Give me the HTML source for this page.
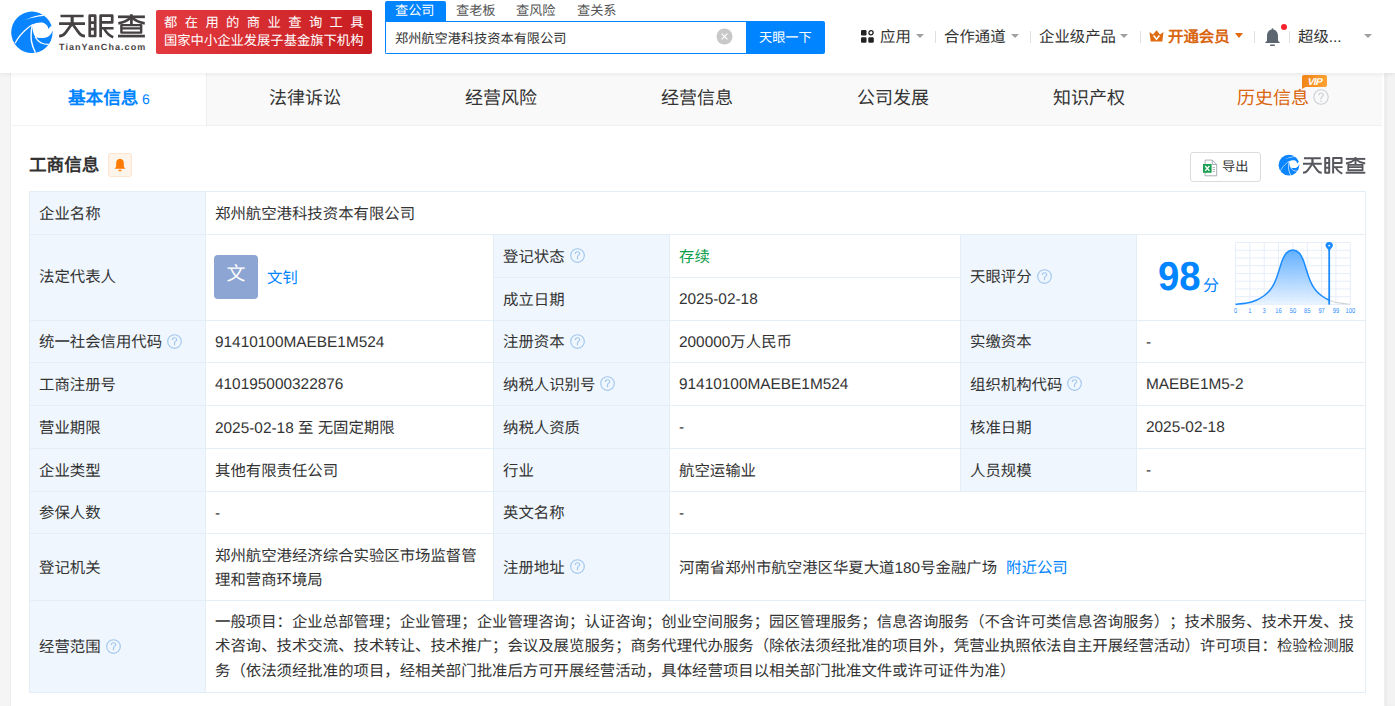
<!DOCTYPE html>
<html lang="zh-CN"><head><meta charset="utf-8">
<style>
*{box-sizing:border-box;margin:0;padding:0}
html,body{width:1395px;height:706px;overflow:hidden}
body{position:relative;background:#f5f5f5;font-family:"Liberation Sans",sans-serif;color:#333;text-spacing-trim:space-all;text-rendering:geometricPrecision;font-size:15.4px}
.a{position:absolute}
.nw{white-space:nowrap}
#hdr{left:0;top:0;width:1395px;height:73px;background:#fff;z-index:2;box-shadow:0 1px 5px rgba(0,0,0,.075)}
#card{left:11px;top:73px;width:1373px;height:633px;background:#fff;box-shadow:0 0 2px rgba(0,0,0,.09)}
#rstrip{left:1385px;top:73px;width:10px;height:633px;background:#f3f3f3;box-shadow:inset 2px 0 2px rgba(0,0,0,.03)}
.tabbar{left:11px;top:73px;width:1371px;height:53px;background:#f9f9f9;border-bottom:1px solid #f0f0f0}
.tab{top:72px;height:52px;line-height:52px;font-size:18px;color:#333;text-align:center;width:196px}
.cell{position:absolute;border:1px solid #e4eef6;display:flex;align-items:center;padding-left:9px;padding-top:3px;font-size:15.4px;line-height:20px;color:#333;white-space:nowrap}
.lb{background:#eff6fd}
.q{display:inline-block;width:15px;height:15px;margin-left:5px;vertical-align:middle;position:relative;top:-2px}
.caret{position:absolute;width:0;height:0;border-left:4px solid transparent;border-right:4px solid transparent;border-top:4px solid #a0a0a0}
.sep{position:absolute;width:1px;height:12px;background:#e0e0e0;top:31px}
.nav{position:absolute;top:28px;line-height:20px;font-size:15.4px;color:#333;white-space:nowrap}
</style></head><body>
<div id="hdr" class="a">
  <!-- logo -->
  <svg width="0" height="0" style="position:absolute"><symbol id="logo" viewBox="0 0 50 50">
    <circle cx="23.9" cy="24.3" r="20.7" fill="#0a84ff"/>
    <path d="M24.3,16.8 C27,14.9 31,14.2 34,14.5 C37.5,15 39.9,17.6 40.4,21 L42.6,18.3 L48,18 L48,22.7 L44.6,22.7 C43.2,26.5 40.3,29.3 36.8,29.8 C33,30.3 29.5,30 27.3,29 C25.2,26 24.4,21.5 24.3,16.8 Z" fill="#fff"/>
    <path d="M7.1,35.2 C10,29.5 14,25 18,21.5 C20,19.6 22.6,17.6 25,16.5" stroke="#fff" stroke-width="1.2" fill="none"/>
    <path d="M24.3,17 C23.3,22 22.5,28 23.5,33.5 C24.3,38 25.8,41.5 27.5,44.8" stroke="#fff" stroke-width="1.4" fill="none"/>
    <path d="M27.1,28.8 C28.5,31.5 30.5,33.5 33,34.8 C35,35.9 37.5,36.5 40.8,36.4" stroke="#fff" stroke-width="1.3" fill="none"/>
    <path d="M16.5,12.2 C22,9.2 29,7.1 36,6.4 L35.6,8.1 C29,8.5 23,10 16.5,12.2 Z" fill="#fff"/>
  </symbol></svg>
  <svg class="a" style="left:8px;top:8px" width="50" height="50" viewBox="0 0 50 50"><use href="#logo"/></svg>
  <svg width="0" height="0" style="position:absolute"><symbol id="lt" viewBox="0 0 1395 470"><g fill="none" stroke="currentColor" stroke-width="40" stroke-linejoin="round">
<path d="M80,88 L420,88 M60,200 L440,200"/>
<path d="M252,100 L252,205" stroke-width="46"/>
<path d="M245,210 L150,340 Q120,383 60,383"/>
<path d="M259,210 L354,340 Q384,383 440,383"/>
<path d="M510,83 L510,382 L590,382 L590,83 Z M510,185 L590,185 M510,280 L590,280"/>
<path d="M670,400 L670,83 L840,83 L840,182 L670,182 M690,268 L860,268"/>
<path d="M720,268 C750,330 790,375 855,400"/>
<path d="M925,100 L1320,100"/>
<path d="M1122,62 L1122,225"/>
<path d="M1108,115 C1060,160 1010,185 930,195"/>
<path d="M1136,115 C1185,160 1235,185 1318,195"/>
<path d="M975,222 L1265,222 L1265,332 L975,332 Z M975,270 L1265,270" stroke-width="36"/>
<path d="M925,383 L1320,383"/>
</g></symbol></svg><svg class="a" style="left:55px;top:10px;color:#454041" width="95" height="32" viewBox="0 0 1395 470"><use href="#lt"/></svg>
  <div class="a nw" style="left:59px;top:40.7px;font-size:9px;line-height:12px;font-weight:bold;color:#4a4546;letter-spacing:1.07px">TianYanCha.com</div>
  <!-- red badge -->
  <div class="a" style="left:156px;top:10px;width:216px;height:44px;border-radius:2px;background:linear-gradient(100deg,#e33b40,#c71d21)"></div>
  <div class="a nw" style="left:164px;top:14px;font-size:13.3px;line-height:17px;color:#fff;letter-spacing:7.4px">都在用的商业查询工具</div>
  <div class="a nw" style="left:164px;top:32px;font-size:13.3px;line-height:17px;color:#fff">国家中小企业发展子基金旗下机构</div>
  <!-- search -->
  <div class="a" style="left:385px;top:1px;width:61px;height:20px;background:#0084ff;border-radius:2px 2px 0 0"></div>
  <div class="a nw" style="left:395px;top:1.5px;font-size:13.2px;line-height:18px;color:#fff">查公司</div>
  <div class="a nw" style="left:456px;top:1.5px;font-size:13.2px;line-height:18px;color:#555">查老板</div>
  <div class="a nw" style="left:516px;top:1.5px;font-size:13.2px;line-height:18px;color:#555">查风险</div>
  <div class="a nw" style="left:577px;top:1.5px;font-size:13.2px;line-height:18px;color:#555">查关系</div>
  <div class="a" style="left:385px;top:21px;width:362px;height:33px;border:1px solid #0084ff;border-right:0;border-radius:0 0 0 2px;background:#fff"></div>
  <div class="a nw" style="left:395px;top:29.5px;font-size:13.2px;line-height:18px;color:#333">郑州航空港科技资本有限公司</div>
  <svg class="a" style="left:716px;top:28px" width="17" height="17" viewBox="0 0 17 17"><circle cx="8.5" cy="8.5" r="8" fill="#c8c8c8"/><path d="M5.6,5.6 L11.4,11.4 M11.4,5.6 L5.6,11.4" stroke="#fff" stroke-width="1.2"/></svg>
  <div class="a" style="left:746px;top:21px;width:79px;height:33px;background:#0084ff;border-radius:0 2px 2px 0"></div>
  <div class="a nw" style="left:759px;top:29px;font-size:13.2px;line-height:18px;color:#fff">天眼一下</div>
  <!-- right nav -->
  <svg class="a" style="left:861px;top:30px" width="13" height="13" viewBox="0 0 13 13">
    <rect x="0" y="0" width="5.5" height="5.5" rx="1.2" fill="#222"/>
    <circle cx="10" cy="2.8" r="2.1" fill="none" stroke="#222" stroke-width="1.3"/>
    <rect x="0" y="7.3" width="5.5" height="5.5" rx="1.2" fill="#222"/>
    <rect x="7.3" y="7.3" width="5.5" height="5.5" rx="1.2" fill="#222"/>
  </svg>
  <div class="nav" style="left:880px">应用</div>
  <div class="caret" style="left:916px;top:34px"></div>
  <div class="sep" style="left:935px"></div>
  <div class="nav" style="left:944px">合作通道</div>
  <div class="caret" style="left:1011px;top:34px"></div>
  <div class="sep" style="left:1030px"></div>
  <div class="nav" style="left:1039px">企业级产品</div>
  <div class="caret" style="left:1120px;top:34px"></div>
  <div class="sep" style="left:1140px"></div>
  <svg class="a" style="left:1149px;top:30px" width="15" height="12" viewBox="0 0 15 12">
    <path d="M0.5,2 L4,4.5 L7.5,0.3 L11,4.5 L14.5,2 L13.3,11.5 L1.7,11.5 Z" fill="#e06a10"/>
    <path d="M4.6,5.6 L7.5,9.3 L10.4,5.6" stroke="#fff" stroke-width="1.6" fill="none"/>
  </svg>
  <div class="nav" style="left:1168px;color:#d9650f;font-weight:bold">开通会员</div>
  <div class="caret" style="left:1235px;top:33px;border-top-color:#e06a10;border-left-width:4px;border-right-width:4px;border-top-width:5px"></div>
  <div class="sep" style="left:1254px"></div>
  <svg class="a" style="left:1264px;top:28px" width="17" height="19" viewBox="0 0 17 19">
    <path d="M8.5,1.5 C4.5,1.5 3,5 3,8 L3,12.5 L1,15 L16,15 L14,12.5 L14,8 C14,5 12.5,1.5 8.5,1.5 Z" fill="#5c6570"/>
    <rect x="6" y="16.5" width="5" height="1.5" rx="0.7" fill="#5c6570"/><rect x="7.6" y="0.3" width="1.8" height="2.2" rx="0.8" fill="#5c6570"/>
  </svg>
  <div class="a" style="left:1281px;top:24px;width:6px;height:6px;border-radius:50%;background:#f5222d"></div>
  <div class="sep" style="left:1289px"></div>
  <div class="nav" style="left:1298px">超级...</div>
  <div class="caret" style="left:1364px;top:34px"></div>
</div>

<div id="card" class="a"></div>
<div id="rstrip" class="a"></div>
<div class="a tabbar"></div>
<div class="a" style="left:11px;top:73px;width:196px;height:53px;background:#fff;border-right:1px solid #efefef;border-bottom:1px solid #f4f4f4"></div>
<div class="a nw" style="left:68px;top:80px;line-height:36px;font-size:17.6px;font-weight:bold;color:#0084ff">基本信息<span style="font-size:14px;font-weight:normal;margin-left:3.7px">6</span></div>
<div class="a tab" style="left:207px">法律诉讼</div>
<div class="a tab" style="left:403px">经营风险</div>
<div class="a tab" style="left:599px">经营信息</div>
<div class="a tab" style="left:795px">公司发展</div>
<div class="a tab" style="left:991px">知识产权</div>
<div class="a nw" style="left:1237px;top:72px;line-height:52px;font-size:18px;color:#d9650f">历史信息</div>
<svg class="a" style="left:1313px;top:89px" width="16" height="16" viewBox="0 0 16 16"><circle cx="8" cy="8" r="7.2" fill="none" stroke="#c9cfd6" stroke-width="1.1"/><path d="M5.8,6.3 C5.8,4.8 6.8,4 8,4 C9.3,4 10.3,4.8 10.3,6 C10.3,7.5 8,7.7 8,9.5 L8,10.5" fill="none" stroke="#c9cfd6" stroke-width="1.2"/><circle cx="8" cy="12.2" r="0.8" fill="#c9cfd6"/></svg>
<svg class="a" style="left:1302px;top:75px" width="25" height="14" viewBox="0 0 25 14"><defs><linearGradient id="vg" x1="0" y1="0" x2="1" y2="0"><stop offset="0" stop-color="#f0861a"/><stop offset="1" stop-color="#ffa233"/></linearGradient></defs><path d="M0,2 Q0,0 2,0 L23,0 Q25,0 25,2 L25,10 Q25,12 23,12 L3.5,12 L0,14 Z" fill="url(#vg)"/><text x="14.5" y="9.6" text-anchor="middle" font-family="Liberation Sans" font-weight="bold" font-size="10" fill="#fff" letter-spacing="-0.7" transform="skewX(-14)">VIP</text></svg>

<svg width="0" height="0" style="position:absolute"><symbol id="qi" viewBox="0 0 15 15"><circle cx="7.5" cy="7.5" r="6.8" fill="none" stroke="#a3c8ee" stroke-width="1.15"/><path d="M5.3,5.9 C5.3,4.4 6.3,3.7 7.5,3.7 C8.8,3.7 9.7,4.5 9.7,5.7 C9.7,7.1 7.5,7.3 7.5,9 L7.5,11.2" fill="none" stroke="#a3c8ee" stroke-width="1.15"/></symbol></svg>
<div class="a nw" style="left:29px;top:150px;font-size:17.6px;line-height:30px;font-weight:bold;color:#333">工商信息</div>
<div class="a" style="left:108px;top:153px;width:24px;height:24px;border:1px solid #ffe4cf;background:#fff4ea;border-radius:3px"></div>
<svg class="a" style="left:114px;top:158px" width="12" height="14" viewBox="0 0 12 14"><path d="M6,0.8 C3.3,0.8 2.2,3 2.2,5.3 L2.2,8.8 L0.6,10.8 L11.4,10.8 L9.8,8.8 L9.8,5.3 C9.8,3 8.7,0.8 6,0.8 Z" fill="#ff7a00"/><path d="M4.3,11.8 C4.5,13 5.2,13.5 6,13.5 C6.8,13.5 7.5,13 7.7,11.8 Z" fill="#ff7a00"/></svg>
<div class="a" style="left:1190px;top:152px;width:71px;height:30px;border:1px solid #dcdcdc;border-radius:3px;background:#fff"></div>
<svg class="a" style="left:1202px;top:158.5px" width="16" height="18" viewBox="0 0 16 18"><path d="M3.1,1.1 L10.3,1.1 L14.7,5.5 L14.7,16.8 L3.1,16.8 Z" fill="#fff" stroke="#a0a5aa" stroke-width="0.9"/><path d="M10.3,1.1 L10.3,5.5 L14.7,5.5" fill="none" stroke="#a0a5aa" stroke-width="0.9"/><path d="M10.6,8.5 L13,8.5 M10.6,10.5 L13,10.5 M10.6,12.5 L13,12.5" stroke="#a0a5aa" stroke-width="0.8"/><rect x="1" y="5" width="8.6" height="8.8" fill="#1ba053"/><path d="M3.2,7 L7.4,11.9 M7.4,7 L3.2,11.9" stroke="#fff" stroke-width="1.3"/></svg>
<div class="a nw" style="left:1222px;top:157.5px;font-size:13.2px;line-height:18px;color:#333">导出</div>
<svg class="a" style="left:1277px;top:153px" width="25" height="25" viewBox="0 0 50 50"><use href="#logo"/></svg>
<svg class="a" style="left:1300px;top:154px;color:#56575c" width="69" height="23" viewBox="0 0 1395 470" preserveAspectRatio="none"><use href="#lt"/></svg>
<div class="cell lb" style="left:29px;top:191px;width:177px;height:44px;">企业名称</div>
<div class="cell" style="left:205px;top:191px;width:1161px;height:44px;">郑州航空港科技资本有限公司</div>
<div class="cell lb" style="left:29px;top:234px;width:177px;height:87px;;padding-top:1px">法定代表人</div>
<div class="cell" style="left:205px;top:234px;width:289px;height:87px;"><div style="width:44px;height:44px;border-radius:4px;background:#8ca5d3;color:#fff;font-size:19px;text-align:center;line-height:40px;margin:-4px 9px 0 -1px">文</div><span style="color:#0084ff">文钊</span></div>
<div class="cell lb" style="left:493px;top:234px;width:177px;height:44px;">登记状态<svg class="q" viewBox="0 0 15 15"><use href="#qi"/></svg></div>
<div class="cell" style="left:669px;top:234px;width:292px;height:44px;"><span style="color:#0a9d4a">存续</span></div>
<div class="cell lb" style="left:493px;top:277px;width:177px;height:44px;">成立日期</div>
<div class="cell" style="left:669px;top:277px;width:292px;height:44px;padding-top:2px;">2025-02-18</div>
<div class="cell lb" style="left:960px;top:234px;width:177px;height:87px;;padding-top:1px">天眼评分<svg class="q" viewBox="0 0 15 15"><use href="#qi"/></svg></div>
<div class="cell" style="left:1136px;top:234px;width:230px;height:87px;"></div>
<div class="cell lb" style="left:29px;top:320px;width:177px;height:43px;">统一社会信用代码<svg class="q" viewBox="0 0 15 15"><use href="#qi"/></svg></div>
<div class="cell" style="left:205px;top:320px;width:289px;height:43px;padding-top:2px;">91410100MAEBE1M524</div>
<div class="cell lb" style="left:493px;top:320px;width:177px;height:43px;">注册资本<svg class="q" viewBox="0 0 15 15"><use href="#qi"/></svg></div>
<div class="cell" style="left:669px;top:320px;width:292px;height:43px;">200000万人民币</div>
<div class="cell lb" style="left:960px;top:320px;width:177px;height:43px;">实缴资本</div>
<div class="cell" style="left:1136px;top:320px;width:230px;height:43px;padding-top:2px;">-</div>
<div class="cell lb" style="left:29px;top:362px;width:177px;height:44px;">工商注册号</div>
<div class="cell" style="left:205px;top:362px;width:289px;height:44px;padding-top:2px;">410195000322876</div>
<div class="cell lb" style="left:493px;top:362px;width:177px;height:44px;">纳税人识别号<svg class="q" viewBox="0 0 15 15"><use href="#qi"/></svg></div>
<div class="cell" style="left:669px;top:362px;width:292px;height:44px;padding-top:2px;">91410100MAEBE1M524</div>
<div class="cell lb" style="left:960px;top:362px;width:177px;height:44px;">组织机构代码<svg class="q" viewBox="0 0 15 15"><use href="#qi"/></svg></div>
<div class="cell" style="left:1136px;top:362px;width:230px;height:44px;padding-top:2px;">MAEBE1M5-2</div>
<div class="cell lb" style="left:29px;top:405px;width:177px;height:44px;">营业期限</div>
<div class="cell" style="left:205px;top:405px;width:289px;height:44px;">2025-02-18 至 无固定期限</div>
<div class="cell lb" style="left:493px;top:405px;width:177px;height:44px;">纳税人资质</div>
<div class="cell" style="left:669px;top:405px;width:292px;height:44px;padding-top:2px;">-</div>
<div class="cell lb" style="left:960px;top:405px;width:177px;height:44px;">核准日期</div>
<div class="cell" style="left:1136px;top:405px;width:230px;height:44px;padding-top:2px;">2025-02-18</div>
<div class="cell lb" style="left:29px;top:448px;width:177px;height:44px;">企业类型</div>
<div class="cell" style="left:205px;top:448px;width:289px;height:44px;">其他有限责任公司</div>
<div class="cell lb" style="left:493px;top:448px;width:177px;height:44px;">行业</div>
<div class="cell" style="left:669px;top:448px;width:292px;height:44px;">航空运输业</div>
<div class="cell lb" style="left:960px;top:448px;width:177px;height:44px;">人员规模</div>
<div class="cell" style="left:1136px;top:448px;width:230px;height:44px;padding-top:2px;">-</div>
<div class="cell lb" style="left:29px;top:491px;width:177px;height:43px;">参保人数</div>
<div class="cell" style="left:205px;top:491px;width:289px;height:43px;padding-top:2px;">-</div>
<div class="cell lb" style="left:493px;top:491px;width:177px;height:43px;">英文名称</div>
<div class="cell" style="left:669px;top:491px;width:697px;height:43px;padding-top:2px;">-</div>
<div class="cell lb" style="left:29px;top:533px;width:177px;height:68px;">登记机关</div>
<div class="cell" style="left:205px;top:533px;width:289px;height:68px;"><div style="line-height:24px;white-space:nowrap;position:relative;top:0px">郑州航空港经济综合实验区市场监督管<br>理和营商环境局</div></div>
<div class="cell lb" style="left:493px;top:533px;width:177px;height:68px;">注册地址<svg class="q" viewBox="0 0 15 15"><use href="#qi"/></svg></div>
<div class="cell" style="left:669px;top:533px;width:697px;height:68px;">河南省郑州市航空港区华夏大道180号金融广场<span style="color:#0084ff;margin-left:9px">附近公司</span></div>
<div class="cell lb" style="left:29px;top:600px;width:177px;height:93px;">经营范围<svg class="q" viewBox="0 0 15 15"><use href="#qi"/></svg></div>
<div class="cell" style="left:205px;top:600px;width:1161px;height:93px;"><div style="line-height:24.2px;white-space:nowrap;position:relative;top:-0.5px">一般项目：企业总部管理；企业管理；企业管理咨询；认证咨询；创业空间服务；园区管理服务；信息咨询服务（不含许可类信息咨询服务）；技术服务、技术开发、技<br>术咨询、技术交流、技术转让、技术推广；会议及展览服务；商务代理代办服务（除依法须经批准的项目外，凭营业执照依法自主开展经营活动）许可项目：检验检测服<br>务（依法须经批准的项目，经相关部门批准后方可开展经营活动，具体经营项目以相关部门批准文件或许可证件为准）</div></div>
<svg class="a" style="left:1225px;top:235px" width="135" height="85" viewBox="0 0 135 85">
<defs><linearGradient id="gf" x1="0" y1="0" x2="0" y2="1"><stop offset="0" stop-color="#4ea5ff"/><stop offset="1" stop-color="#e6f2ff"/></linearGradient>
<clipPath id="cl"><rect x="0" y="0" width="104.20" height="85"/></clipPath><clipPath id="cr"><rect x="104.20" y="0" width="60" height="85"/></clipPath></defs>
<g stroke="#e6eefa" stroke-width="1" fill="none"><path d="M10.50,7.5 L10.50,69.4"/><path d="M24.85,7.5 L24.85,69.4"/><path d="M39.20,7.5 L39.20,69.4"/><path d="M53.55,7.5 L53.55,69.4"/><path d="M67.90,7.5 L67.90,69.4"/><path d="M82.25,7.5 L82.25,69.4"/><path d="M96.60,7.5 L96.60,69.4"/><path d="M110.95,7.5 L110.95,69.4"/><path d="M125.30,7.5 L125.30,69.4"/><path d="M10.5,7.50 L125.3,7.50"/><path d="M10.5,15.24 L125.3,15.24"/><path d="M10.5,22.98 L125.3,22.98"/><path d="M10.5,30.72 L125.3,30.72"/><path d="M10.5,38.46 L125.3,38.46"/><path d="M10.5,46.20 L125.3,46.20"/><path d="M10.5,53.94 L125.3,53.94"/><path d="M10.5,61.68 L125.3,61.68"/><path d="M10.5,69.42 L125.3,69.42"/></g>
<path d="M10.5,69.4 C12.88,69.07 21.25,68.14 24.8,67.4 C28.35,66.66 29.48,66.03 31.8,64.96 C34.12,63.89 36.55,62.58 38.7,61 C40.85,59.42 43.05,57.40 44.7,55.5 C46.35,53.60 47.45,51.73 48.6,49.6 C49.75,47.47 50.60,45.35 51.6,42.7 C52.60,40.05 53.62,36.68 54.6,33.7 C55.58,30.72 56.35,27.43 57.5,24.8 C58.65,22.17 59.78,19.53 61.5,17.9 C63.22,16.27 65.70,15.00 67.8,15.0 C69.90,15.00 72.38,16.27 74.1,17.9 C75.82,19.53 76.95,22.17 78.1,24.8 C79.25,27.43 80.02,30.72 81.0,33.7 C81.98,36.68 83.00,40.05 84.0,42.7 C85.00,45.35 85.85,47.47 87.0,49.6 C88.15,51.73 89.25,53.60 90.9,55.5 C92.55,57.40 94.75,59.42 96.9,61 C99.05,62.58 101.48,63.89 103.8,64.96 C106.12,66.03 107.25,66.66 110.8,67.4 C114.35,68.14 122.72,69.07 125.1,69.4 Z" fill="url(#gf)" fill-opacity="0.88" clip-path="url(#cl)"/>
<path d="M10.5,69.4 C12.88,69.07 21.25,68.14 24.8,67.4 C28.35,66.66 29.48,66.03 31.8,64.96 C34.12,63.89 36.55,62.58 38.7,61 C40.85,59.42 43.05,57.40 44.7,55.5 C46.35,53.60 47.45,51.73 48.6,49.6 C49.75,47.47 50.60,45.35 51.6,42.7 C52.60,40.05 53.62,36.68 54.6,33.7 C55.58,30.72 56.35,27.43 57.5,24.8 C58.65,22.17 59.78,19.53 61.5,17.9 C63.22,16.27 65.70,15.00 67.8,15.0 C69.90,15.00 72.38,16.27 74.1,17.9 C75.82,19.53 76.95,22.17 78.1,24.8 C79.25,27.43 80.02,30.72 81.0,33.7 C81.98,36.68 83.00,40.05 84.0,42.7 C85.00,45.35 85.85,47.47 87.0,49.6 C88.15,51.73 89.25,53.60 90.9,55.5 C92.55,57.40 94.75,59.42 96.9,61 C99.05,62.58 101.48,63.89 103.8,64.96 C106.12,66.03 107.25,66.66 110.8,67.4 C114.35,68.14 122.72,69.07 125.1,69.4" fill="none" stroke="#d3d7dc" stroke-width="1.1" clip-path="url(#cr)"/>
<path d="M10.5,69.4 C12.88,69.07 21.25,68.14 24.8,67.4 C28.35,66.66 29.48,66.03 31.8,64.96 C34.12,63.89 36.55,62.58 38.7,61 C40.85,59.42 43.05,57.40 44.7,55.5 C46.35,53.60 47.45,51.73 48.6,49.6 C49.75,47.47 50.60,45.35 51.6,42.7 C52.60,40.05 53.62,36.68 54.6,33.7 C55.58,30.72 56.35,27.43 57.5,24.8 C58.65,22.17 59.78,19.53 61.5,17.9 C63.22,16.27 65.70,15.00 67.8,15.0 C69.90,15.00 72.38,16.27 74.1,17.9 C75.82,19.53 76.95,22.17 78.1,24.8 C79.25,27.43 80.02,30.72 81.0,33.7 C81.98,36.68 83.00,40.05 84.0,42.7 C85.00,45.35 85.85,47.47 87.0,49.6 C88.15,51.73 89.25,53.60 90.9,55.5 C92.55,57.40 94.75,59.42 96.9,61 C99.05,62.58 101.48,63.89 103.8,64.96 C106.12,66.03 107.25,66.66 110.8,67.4 C114.35,68.14 122.72,69.07 125.1,69.4" fill="none" stroke="#1a8cff" stroke-width="1.5" clip-path="url(#cl)"/>
<path d="M104.20,13 L104.20,69.6" stroke="#1a8cff" stroke-width="1.8"/>
<path d="M100.50,10.6 A3.7,3.7 0 1 1 107.90,10.6 C107.90,12.4 105.40,14 104.20,16.2 C103.00,14 100.50,12.4 100.50,10.6 Z" fill="#1a8cff"/>
<circle cx="104.20" cy="10.6" r="0.9" fill="#fff"/>
<g fill="#1f8bff" font-size="7" font-family="Liberation Sans"><text transform="translate(10.50,78.2) scale(0.82,1)" text-anchor="middle">0</text><text transform="translate(24.85,78.2) scale(0.82,1)" text-anchor="middle">1</text><text transform="translate(39.20,78.2) scale(0.82,1)" text-anchor="middle">3</text><text transform="translate(53.55,78.2) scale(0.82,1)" text-anchor="middle">16</text><text transform="translate(67.90,78.2) scale(0.82,1)" text-anchor="middle">50</text><text transform="translate(82.25,78.2) scale(0.82,1)" text-anchor="middle">85</text><text transform="translate(96.60,78.2) scale(0.82,1)" text-anchor="middle">97</text><text transform="translate(110.95,78.2) scale(0.82,1)" text-anchor="middle">99</text><text transform="translate(125.30,78.2) scale(0.82,1)" text-anchor="middle">100</text></g>
</svg>
<div class="a nw" style="left:1158px;top:249.5px;font-size:40.5px;line-height:52px;font-weight:bold;color:#0084ff;transform:scaleX(0.945);transform-origin:0 0">98</div>
<div class="a nw" style="left:1203px;top:276.5px;font-size:16px;line-height:20px;color:#0084ff">分</div>
</body></html>
